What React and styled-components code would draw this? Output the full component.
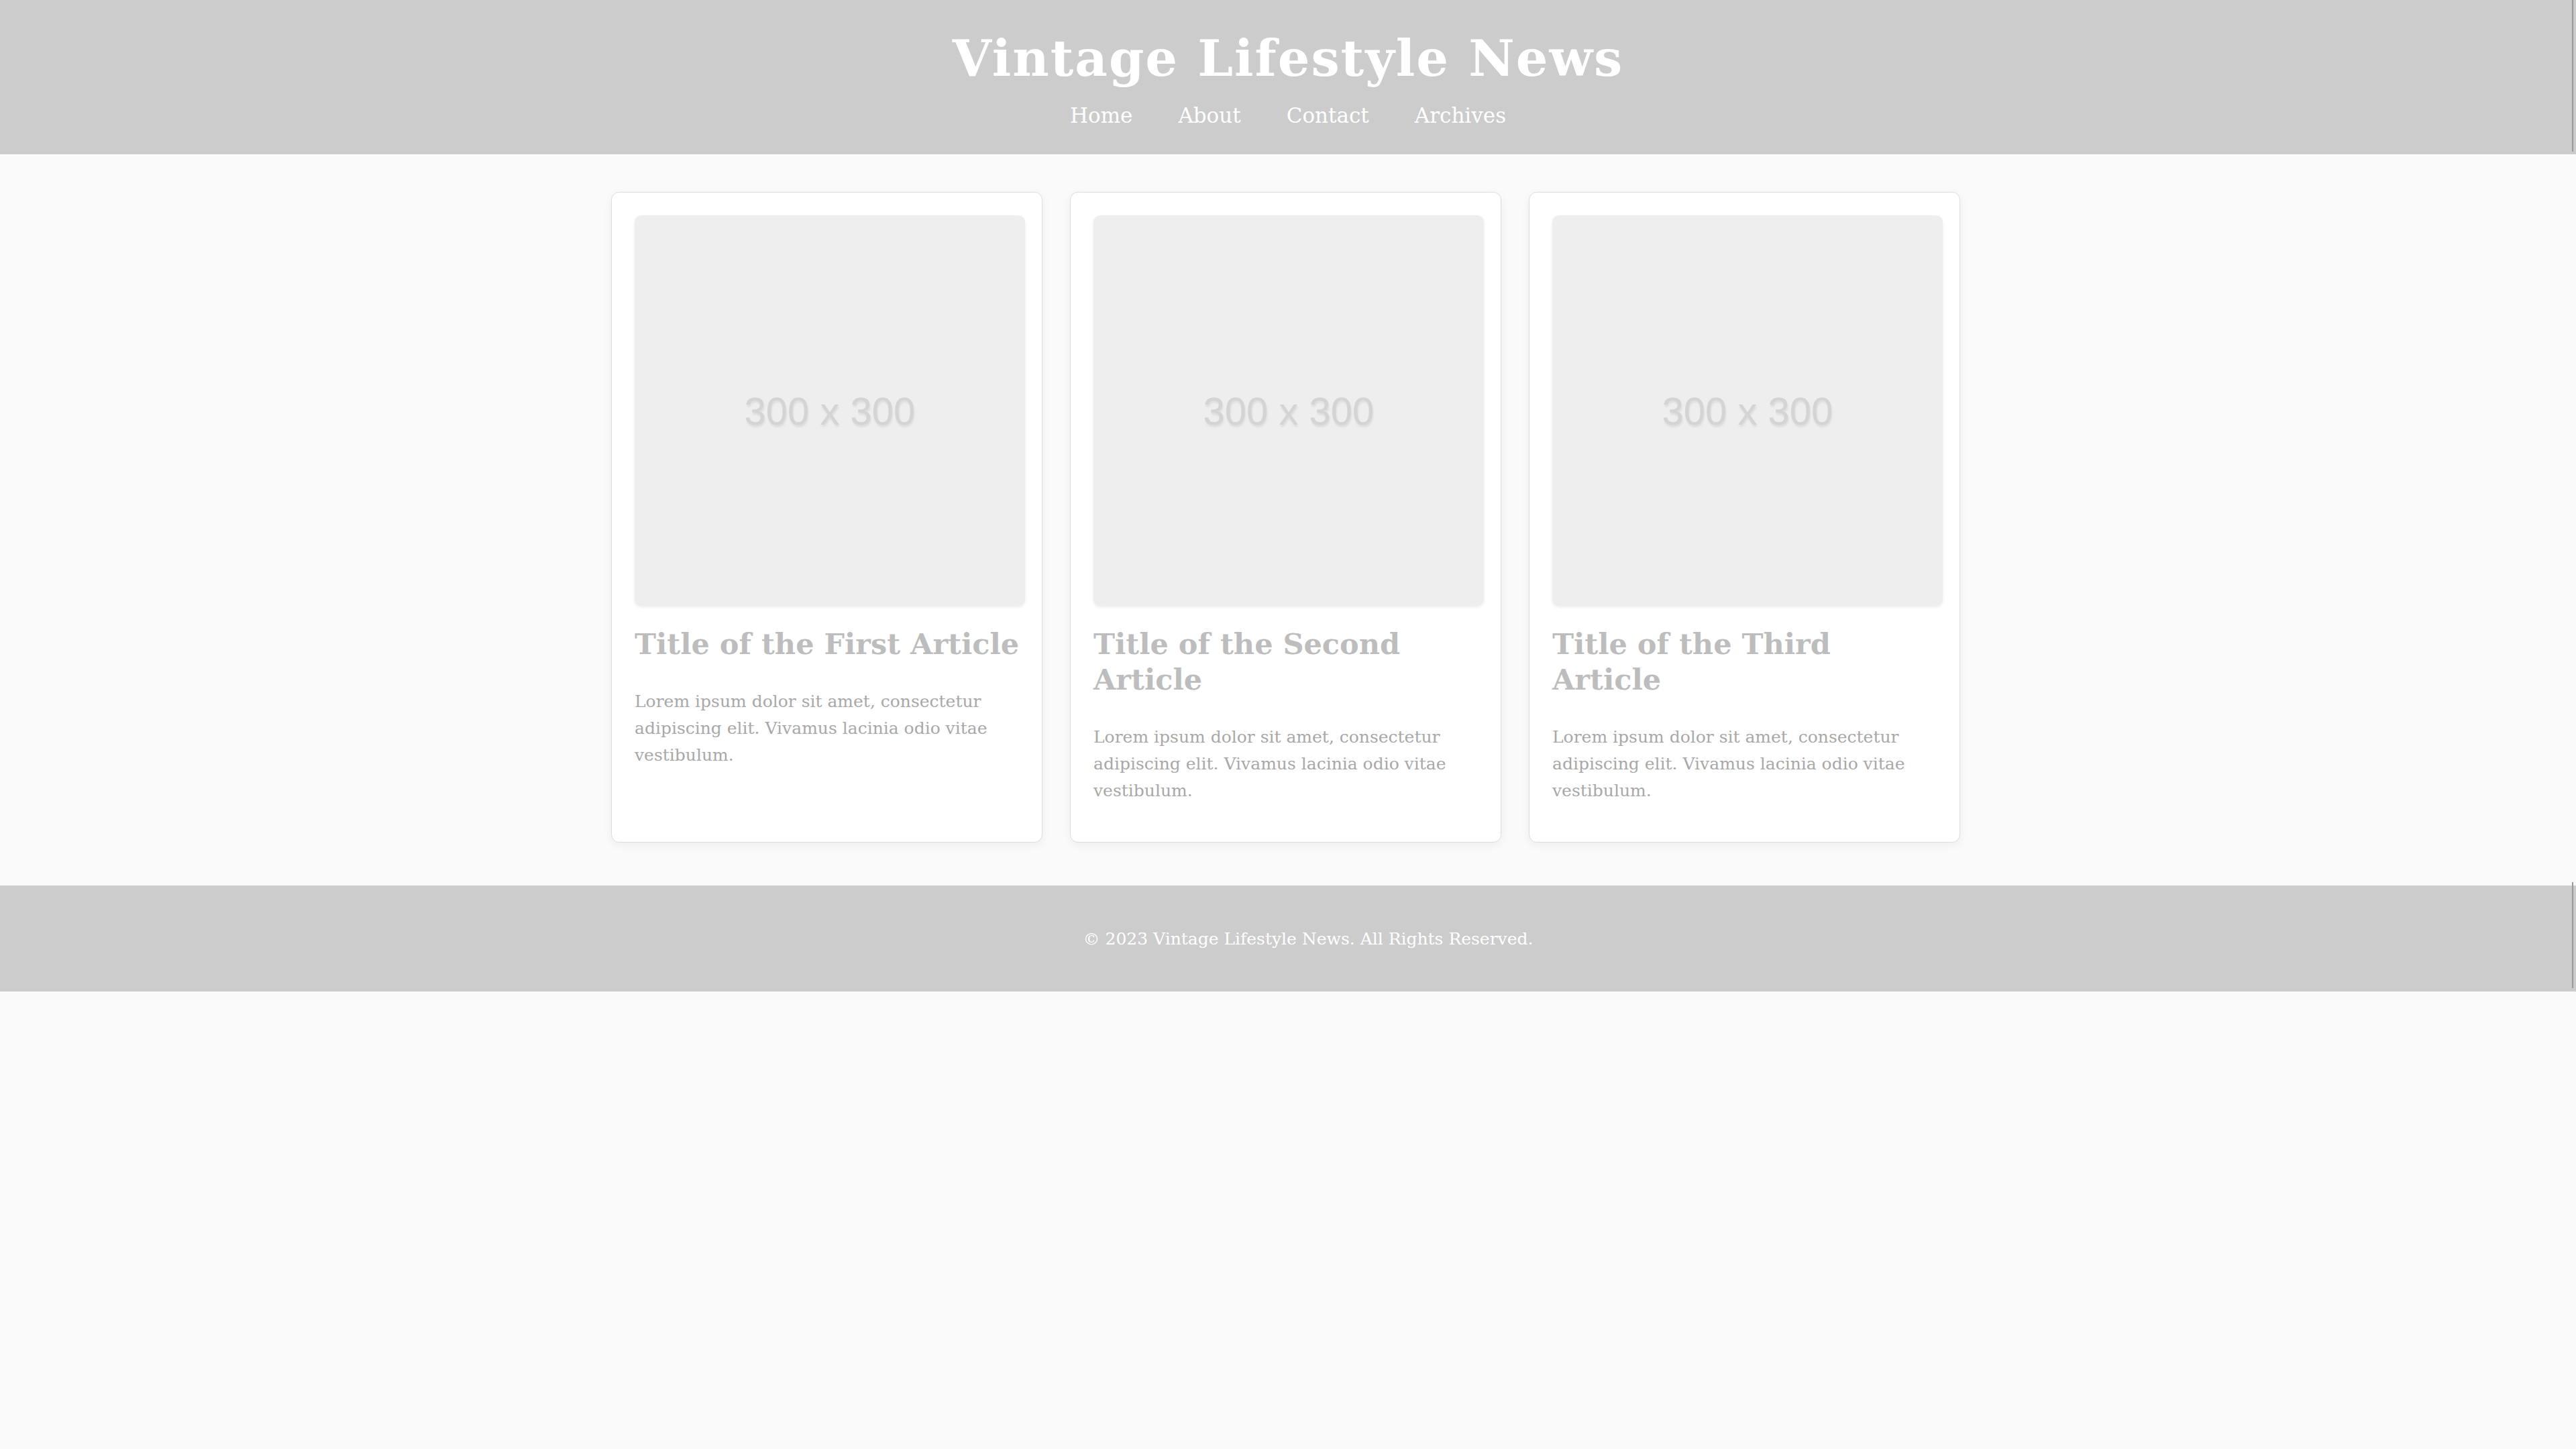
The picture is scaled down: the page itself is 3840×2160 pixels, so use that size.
import React from "react"
import styled, { createGlobalStyle } from "styled-components"

const GlobalStyle = createGlobalStyle`
  html, body {
    margin: 0;
    padding: 0;
    background: #fafafa;
    font-family: "DejaVu Serif", Georgia, serif;
  }
`

const Header = styled.header`
  position: relative;
  box-sizing: border-box;
  height: 230px;
  padding-top: 47px;
  background: #cccccc;
  color: #fff;
  text-align: center;

  &::after {
    content: "";
    position: absolute;
    right: 4px;
    top: 0;
    bottom: 4px;
    width: 2px;
    background: #9a9a9a;
  }
`

const SiteTitle = styled.h1`
  margin: 0;
  font-size: 75px;
  line-height: 80px;
  font-weight: bold;
  letter-spacing: 2px;
`

const Nav = styled.nav`
  display: flex;
  justify-content: center;
  gap: 68px;
  margin-top: 25px;
`

const NavLink = styled.a`
  color: #fff;
  font-size: 31px;
  line-height: 40px;
  text-decoration: none;
`

const Main = styled.main`
  display: grid;
  grid-template-columns: repeat(3, 643px);
  gap: 41px;
  justify-content: center;
  padding: 56px 7px 0 0;
  align-items: stretch;
`

const Card = styled.article`
  box-sizing: border-box;
  background: #fff;
  border: 1px solid #dcdcdc;
  border-radius: 12px;
  box-shadow: 0 4px 14px rgba(0, 0, 0, 0.05);
  padding: 34px 25px 56px 34px;
`

const Thumb = styled.div`
  display: flex;
  align-items: center;
  justify-content: center;
  width: 100%;
  aspect-ratio: 1 / 1;
  background: #eeeeee;
  border-radius: 10px;
  box-shadow: 0 2px 4px rgba(0, 0, 0, 0.08);
  font-family: "Liberation Sans", Arial, sans-serif;
  font-size: 58px;
  color: #d4d4d4;
  text-shadow: 1px 3px 3px rgba(0, 0, 0, 0.08);
`

const CardTitle = styled.h2`
  margin: 31px 0 0;
  font-size: 43px;
  line-height: 53px;
  font-weight: bold;
  color: #bdbdbd;
`

const Excerpt = styled.p`
  margin: 39px 0 0;
  font-size: 25px;
  line-height: 40px;
  color: #a8a8a8;
`

const Footer = styled.footer`
  position: relative;
  box-sizing: border-box;
  height: 158px;
  margin-top: 64px;
  padding-left: 60px;
  display: flex;
  align-items: center;
  justify-content: center;
  background: #cccccc;
  color: #fff;
  font-size: 25px;

  &::after {
    content: "";
    position: absolute;
    right: 4px;
    top: -5px;
    bottom: 5px;
    width: 2px;
    background: #9a9a9a;
  }
`

const articles = [
  "Title of the First Article",
  "Title of the Second Article",
  "Title of the Third Article",
]

function App() {
  return (
    <>
      <GlobalStyle />
      <Header>
        <SiteTitle>Vintage Lifestyle News</SiteTitle>
        <Nav>
          <NavLink href="#">Home</NavLink>
          <NavLink href="#">About</NavLink>
          <NavLink href="#">Contact</NavLink>
          <NavLink href="#">Archives</NavLink>
        </Nav>
      </Header>
      <Main>
        {articles.map((title) => (
          <Card key={title}>
            <Thumb>300 x 300</Thumb>
            <CardTitle>{title}</CardTitle>
            <Excerpt>
              Lorem ipsum dolor sit amet, consectetur adipiscing elit. Vivamus lacinia odio vitae vestibulum.
            </Excerpt>
          </Card>
        ))}
      </Main>
      <Footer>© 2023 Vintage Lifestyle News. All Rights Reserved.</Footer>
    </>
  )
}

export default App
